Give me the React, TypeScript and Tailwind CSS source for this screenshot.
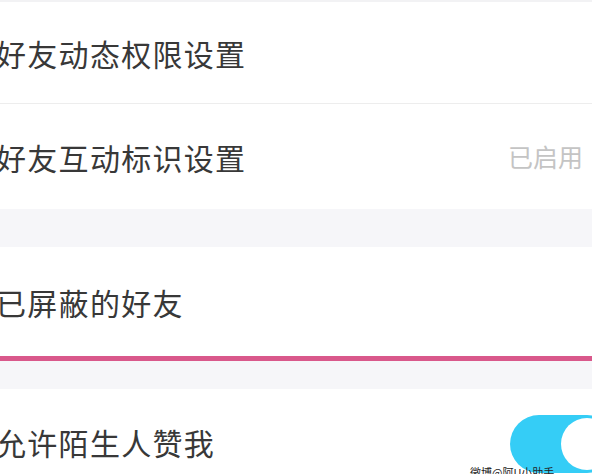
import { ChevronRight } from "lucide-react";

const font = { fontFamily: '"Noto Sans CJK SC", "Noto Sans", sans-serif' };

function Arrow() {
  return <ChevronRight className="-mr-[22px] h-[26px] w-[26px] text-[#d4d4d4]" strokeWidth={2.5} />;
}

function Row({ label, right, className = "" }: { label: string; right?: React.ReactNode; className?: string }) {
  return (
    <div className={`flex items-center justify-between bg-white pl-0 ${className}`}>
      <span className="-ml-[4px] text-[30px] leading-none tracking-[1.3px] text-[#383838]">{label}</span>
      <div className="flex items-center gap-[5px]">{right}</div>
    </div>
  );
}

export default function App() {
  return (
    <div className="relative h-[474px] w-[592px] overflow-hidden bg-[#f6f6f9]" style={font}>
      <div className="h-[2px] bg-[#f2f2f4]" />
      <Row label="好友动态权限设置" right={<Arrow />} className="h-[102px] border-b border-[#ededed]" />
      <Row
        label="好友互动标识设置"
        right={
          <>
            <span className="text-[25px] leading-none text-[#c4c4c4]">已启用</span>
            <Arrow />
          </>
        }
        className="h-[105px]"
      />
      <div className="h-[38px]" />
      <Row label="已屏蔽的好友" right={<Arrow />} className="h-[109px]" />
      <div className="h-[5px] bg-[#d9588b]" />
      <div className="h-[28px]" />
      <Row
        label="允许陌生人赞我"
        right={
          <div className="-mr-[24px] mt-[4px] flex h-[58px] w-[106px] items-center justify-end rounded-full bg-[#35cdf6] px-[3px]">
            <div className="h-[52px] w-[52px] rounded-full bg-white" />
          </div>
        }
        className="h-[105px]"
      />
      <div className="absolute left-[470px] top-[467px] text-[11px] leading-none text-[#222]">微博@阿U小助手</div>
    </div>
  );
}
